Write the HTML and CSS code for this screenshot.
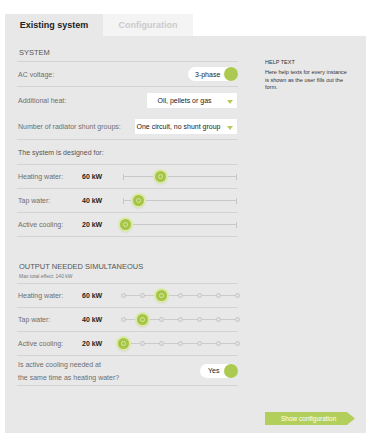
FILE: index.html
```html
<!DOCTYPE html>
<html lang="en">
<head>
  <meta charset="UTF-8" />
  <title>Existing system</title>
  <link rel="stylesheet" href="styles.css">
</head>
<body>
  <div class="page">
    <div class="tabs">
      <div class="tab active">Existing system</div>
      <div class="tab">Configuration</div>
    </div>

    <div class="panel">
      <div class="form">
        <div class="heading">System</div>

        <div class="row line r25">
          <span class="label">AC voltage:</span>
          <div class="toggle"><span>3-phase</span><i></i></div>
        </div>
        <div class="row r26">
          <span class="label">Additional heat:</span>
          <div class="select heat"><span>Oil, pellets or gas</span><i></i></div>
        </div>
        <div class="row line r27">
          <span class="label">Number of radiator shunt groups:</span>
          <div class="select shunt"><span>One circuit, no shunt group</span><i></i></div>
        </div>
        <div class="row line r25">
          <span class="label dark">The system is designed for:</span>
        </div>

        <div class="row line r24">
          <span class="label name">Heating water:</span>
          <span class="value">60 kW</span>
          <div class="slider"><b class="knob" style="left: 33%"></b></div>
        </div>
        <div class="row line r24">
          <span class="label name">Tap water:</span>
          <span class="value">40 kW</span>
          <div class="slider"><b class="knob" style="left: 13%"></b></div>
        </div>
        <div class="row line r24">
          <span class="label name">Active cooling:</span>
          <span class="value">20 kW</span>
          <div class="slider"><b class="knob" style="left: 1%"></b></div>
        </div>

        <div class="heading second">
          Output needed simultaneous
          <small>Max total effect: 140 kW</small>
        </div>

        <div class="row line r24">
          <span class="label name">Heating water:</span>
          <span class="value">60 kW</span>
          <div class="steps">
            <i></i><i></i><i><b class="knob"></b></i><i></i><i></i><i></i><i></i>
          </div>
        </div>
        <div class="row line r24">
          <span class="label name">Tap water:</span>
          <span class="value">40 kW</span>
          <div class="steps">
            <i></i><i><b class="knob"></b></i><i></i><i></i><i></i><i></i><i></i>
          </div>
        </div>
        <div class="row line r24">
          <span class="label name">Active cooling:</span>
          <span class="value">20 kW</span>
          <div class="steps">
            <i><b class="knob"></b></i><i></i><i></i><i></i><i></i><i></i><i></i>
          </div>
        </div>

        <div class="row line r30">
          <span class="label question">Is active cooling needed at<br>the same time as heating water?</span>
          <div class="toggle yes"><span>Yes</span><i></i></div>
        </div>
      </div>

      <div class="help">
        <div class="help-title">Help text</div>
        <p>Here help texts for every instance is shown as the user fills out the form.</p>
        <a href="#" class="show-btn">Show configuration</a>
      </div>
    </div>
  </div>
</body>
</html>
```

FILE: styles.css
```css
body {
  margin: 0;
  background: #fff;
  font-family: "Liberation Sans", Arial, sans-serif;
  color: #6e6e6e;
}
.page {
  padding: 14px 5px 0;
  width: 361px;
}
.tabs {
  display: flex;
  height: 22px;
}
.tab {
  width: 90px;
  display: flex;
  align-items: center;
  justify-content: center;
  font-size: 9px;
  font-weight: bold;
  color: #cbcbcb;
  background: #f4f4f4;
}
.tab.active {
  width: 98px;
  background: #e8e8e8;
  color: #222;
}
.panel {
  background: #e8e8e8;
  height: 397px;
  display: flex;
  padding-left: 12px;
  box-sizing: border-box;
}
.form { width: 221px; }

.heading {
  padding: 13px 2px 4px;
  line-height: 8px;
  font-size: 7.5px;
  text-transform: uppercase;
  color: #555;
  border-bottom: 1px solid #d3d3d3;
}
.heading.second { margin-top: 13px; }
.heading small {
  display: block;
  margin-top: 2px;
  line-height: 6px;
  font-size: 5px;
  text-transform: none;
  color: #777;
}

.row {
  display: flex;
  align-items: center;
  box-sizing: border-box;
  font-size: 7px;
}
.row.line { border-bottom: 1px solid #d3d3d3; }
.r24 { height: 24px; }
.r25 { height: 25px; }
.r26 { height: 26px; }
.r27 { height: 27px; }
.r30 { height: 30px; }

.label { flex: 1; padding-left: 1px; }
.label.dark { color: #555; }
.label.name { flex: none; width: 64px; }
.label.question { line-height: 13px; }
.value {
  width: 41px;
  font-weight: bold;
  color: #222;
}

/* toggles */
.toggle {
  display: flex;
  align-items: center;
  height: 14px;
  width: 50px;
  box-sizing: border-box;
  padding-left: 7px;
  background: #fff;
  border-radius: 7px;
  color: #222;
  font-size: 7px;
}
.toggle span { flex: 1; }
.toggle i {
  width: 14px;
  height: 14px;
  border-radius: 50%;
  background: #acc951;
}
.toggle.yes {
  width: 38px;
  padding-left: 8px;
}

/* dropdowns */
.select {
  display: flex;
  align-items: center;
  height: 15px;
  background: #fff;
  color: #222;
  font-size: 7px;
}
.select span {
  flex: 1;
  text-align: center;
  white-space: nowrap;
}
.select i {
  width: 15px;
  height: 0;
  display: flex;
  justify-content: center;
}
.select i::before {
  content: "";
  border-left: 3.5px solid transparent;
  border-right: 3.5px solid transparent;
  border-top: 4px solid #b3cd5b;
}
.select.heat { width: 90px; margin-right: 1px; }
.select.shunt { width: 102px; margin-right: 1px; }

/* sliders */
.slider {
  flex: 1;
  position: relative;
  height: 6px;
  margin-right: 1px;
  border-left: 1px solid #c6c6c6;
  border-right: 1px solid #c6c6c6;
}
.slider::before {
  content: "";
  position: absolute;
  left: 0;
  right: 0;
  top: 2.5px;
  height: 1px;
  background: #c9c9c9;
}
.steps {
  flex: 1;
  position: relative;
  height: 14px;
  margin: 0 -1.5px 0 -2.5px;
  display: flex;
  align-items: center;
  justify-content: space-between;
}
.steps::before {
  content: "";
  position: absolute;
  left: 2px;
  right: 2px;
  top: 6.5px;
  height: 1px;
  background: #cbcbcb;
}
.steps i {
  position: relative;
  width: 3px;
  height: 3px;
  border: 1px solid #c6c6c6;
  border-radius: 50%;
  background: #e2e2e2;
}
.knob {
  position: absolute;
  top: 50%;
  width: 11px;
  height: 11px;
  margin: -5.5px 0 0 -5.5px;
  border-radius: 50%;
  background: #a6c546;
  box-shadow: 0 0 0 2px #dbe9a9, 0 1px 3px rgba(0, 0, 0, 0.25);
  z-index: 1;
}
.steps .knob { left: 50%; }
.knob::after {
  content: "";
  position: absolute;
  left: 3px;
  top: 3px;
  width: 3px;
  height: 3px;
  border: 1px solid #d7e6a2;
  border-radius: 50%;
}

/* help column */
.help {
  margin-left: 27px;
  width: 91px;
  display: flex;
  flex-direction: column;
  font-size: 5.5px;
  color: #333;
}
.help-title {
  margin-top: 23px;
  line-height: 7px;
  text-transform: uppercase;
}
.help p {
  margin: 3px 0 0;
  line-height: 7.5px;
  padding-right: 8px;
}
.show-btn {
  margin-top: auto;
  margin-bottom: 8px;
  width: 90px;
  height: 13px;
  box-sizing: border-box;
  padding-left: 16px;
  display: flex;
  align-items: center;
  background: #b3cf5b;
  color: #fff;
  font-size: 6.5px;
  text-decoration: none;
  clip-path: polygon(0 0, 91% 0, 100% 50%, 91% 100%, 0 100%);
}
```
